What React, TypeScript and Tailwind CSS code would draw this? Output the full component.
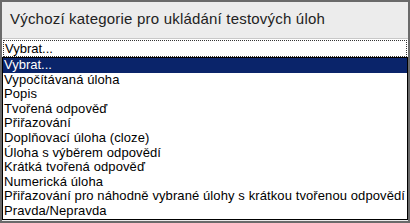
const items = [
  'Vypočítávaná úloha',
  'Popis',
  'Tvořená odpověď',
  'Přiřazování',
  'Doplňovací úloha (cloze)',
  'Úloha s výběrem odpovědí',
  'Krátká tvořená odpověď',
  'Numerická úloha',
  'Přiřazování pro náhodně vybrané úlohy s krátkou tvořenou odpovědí',
  'Pravda/Nepravda',
]

export default function App() {
  return (
    <div className="w-[410px] h-[223px] overflow-hidden border-2 border-[#6a6a6a] bg-[#ececec] font-['Liberation_Sans',Arial,sans-serif] text-black">
      <div className="h-[36px] pl-[8px] pt-[8px] text-[15px] leading-[18px] tracking-[0.2px] text-[#222]">
        Výchozí kategorie pro ukládání testových úloh
      </div>
      <div className="border-t border-[#c8c8c8] bg-white">
        <div className="mx-[1px] mt-[1px] h-[17px] border border-dotted border-[#333] pl-[1px] text-[13px] leading-[15px]">
          Vybrat...
        </div>
      </div>
      <div className="border border-black bg-white text-[13px] leading-[14.6px]">
        <div className="bg-[#0a246a] pl-[1px] text-white">Vybrat...</div>
        {items.map((t) => (
          <div key={t} className="whitespace-nowrap pl-[1px] tracking-[0.1px]">
            {t}
          </div>
        ))}
      </div>
    </div>
  )
}
